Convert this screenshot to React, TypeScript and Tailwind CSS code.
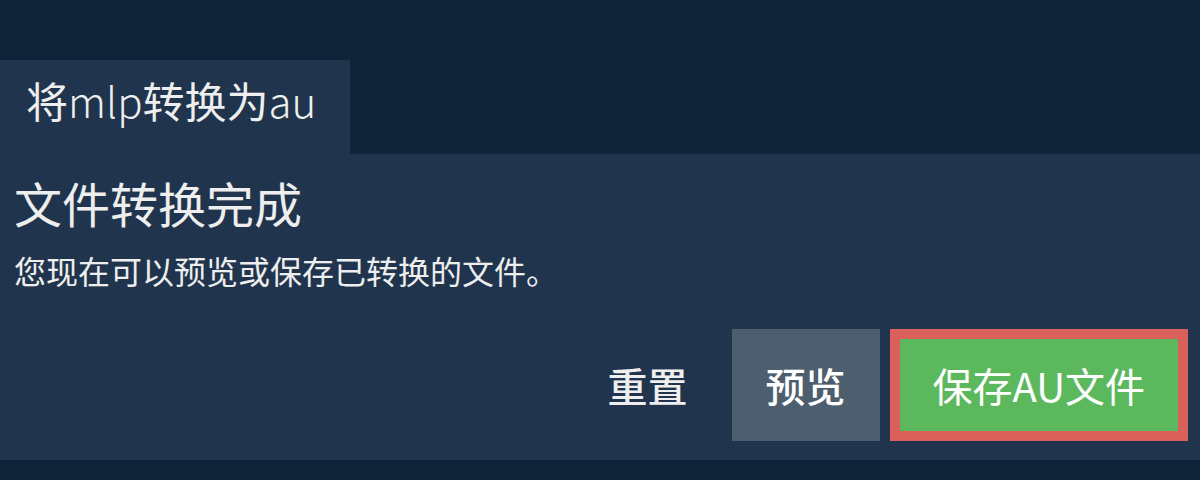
import React from "react";

const font = { fontFamily: '"Noto Sans CJK SC", "Noto Sans", sans-serif' };

export default function App() {
  return (
    <div
      className="w-[1200px] h-[480px] bg-[#0f2339] pt-[60px] text-[#eeeeee] flex flex-col"
      style={font}
    >
      <div className="w-[350px] h-[94px] bg-[#20354d] px-[26px] pt-[19px]">
        <span className="text-[42px] leading-none">
          将<span className="font-light">mlp</span>转换为<span className="font-light">au</span>
        </span>
      </div>
      <div className="h-[306px] bg-[#20354d] px-[14px] pt-[24px] flex flex-col">
        <h1 className="text-[48px] leading-none font-normal">文件转换完成</h1>
        <p className="mt-[28px] text-[32px] leading-none">您现在可以预览或保存已转换的文件。</p>
        <div className="mt-[43px] flex justify-end gap-[10px] mr-[-2px]">
          <button className="h-[112px] px-[34px] text-[40px] font-medium text-[#eeeeee] bg-transparent">
            重置
          </button>
          <button className="h-[112px] px-[34px] text-[40px] font-medium text-white bg-[#4d5e6e]">
            预览
          </button>
          <button className="h-[112px] px-[33px] text-[40px] text-white bg-[#5cb85c] border-[10px] border-[#db5f5b]">
            保存AU文件
          </button>
        </div>
      </div>
    </div>
  );
}
